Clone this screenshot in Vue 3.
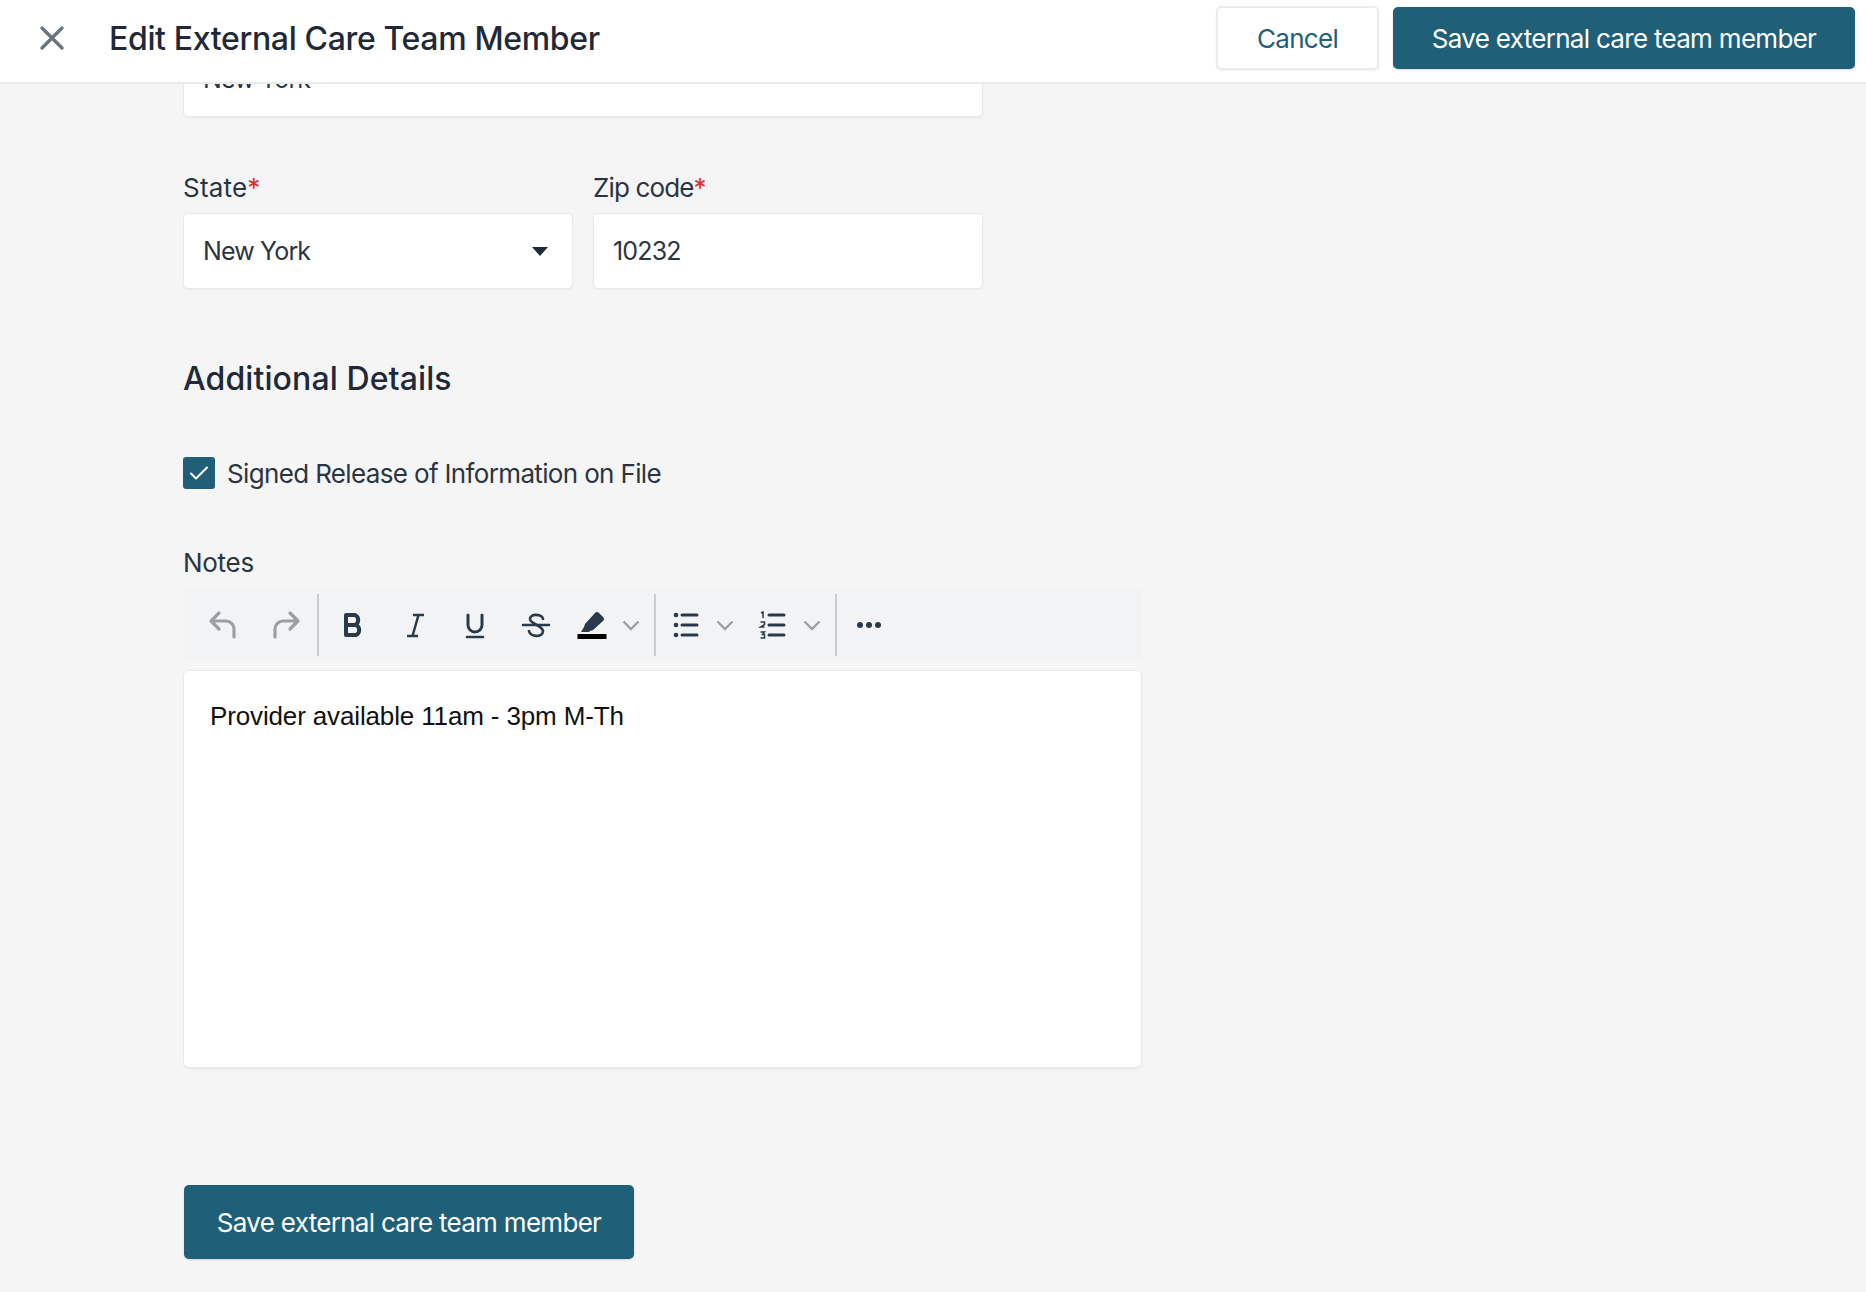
<script setup>
const title = 'Edit External Care Team Member'
const save = 'Save external care team member'
</script>

<template>
  <div class="page">
    <header class="topbar">
      <button class="close" aria-label="Close">
        <svg width="26" height="26" viewBox="0 0 26 26"><path d="M3 3 L23 23 M23 3 L3 23" stroke="#6b7280" stroke-width="3.400" fill="none" stroke-linecap="round"/></svg>
      </button>
      <h1>{{ title }}</h1>
      <div class="actions">
        <button class="btn ghost">Cancel</button>
        <button class="btn primary top">{{ save }}</button>
      </div>
    </header>
    <main class="scroller">
      <div class="form">
        <div class="input city">New York</div>
        <div class="row">
          <div class="field">
            <label class="state">State<span class="req">*</span></label>
            <div class="input select">
              <span>New York</span>
              <svg width="16" height="9" viewBox="0 0 16 9"><path d="M0 0 H16 L8 9 Z" fill="#1f2937"/></svg>
            </div>
          </div>
          <div class="field">
            <label class="zip">Zip code<span class="req">*</span></label>
            <div class="input">10232</div>
          </div>
        </div>
        <h2>Additional Details</h2>
        <div class="check">
          <span class="box">
            <svg width="20" height="16" viewBox="0 0 20 16"><path d="M2 8.500 L7 13.500 L18 2.500" stroke="#fff" stroke-width="2" fill="none" stroke-linecap="round" stroke-linejoin="round"/></svg>
          </span>
          <span>Signed Release of Information on File</span>
        </div>
        <label class="notes">Notes</label>
        <div class="toolbar">
          <div class="group g1">
            <svg class="ic" viewBox="0 0 30 30"><path d="M11 3 L3 11 L11 19 M3 11 H18 A8 8 0 0 1 26 19 V27" stroke="#9aa0a6" stroke-width="3.200" fill="none" stroke-linecap="round" stroke-linejoin="round"/></svg>
            <svg class="ic" viewBox="0 0 30 30"><path d="M19 3 L27 11 L19 19 M27 11 H12 A8 8 0 0 0 4 19 V27" stroke="#9aa0a6" stroke-width="3.200" fill="none" stroke-linecap="round" stroke-linejoin="round"/></svg>
          </div>
          <i class="sep"></i>
          <div class="group g2">
            <svg class="ic" viewBox="0 0 30 30"><path d="M7 5 H16 A5.500 5.500 0 0 1 16 15 H7 Z M7 15 H17 A5.500 5.500 0 0 1 17 25 H7 Z" stroke="#2b3a4a" stroke-width="4" fill="none" stroke-linejoin="round"/></svg>
            <svg class="ic" viewBox="0 0 30 30"><path d="M13 5 H24 M7 26 H18 M18.500 5 L12.500 26" stroke="#2b3a4a" stroke-width="2.500" fill="none"/></svg>
            <svg class="ic" viewBox="0 0 30 30"><path d="M8 5 V15 A7 7 0 0 0 22 15 V5" stroke="#2b3a4a" stroke-width="3" fill="none" stroke-linecap="round"/><path d="M7 27 H23" stroke="#2b3a4a" stroke-width="2.600" stroke-linecap="round"/></svg>
            <svg class="ic" viewBox="0 0 30 30"><path d="M2 15 H28" stroke="#2b3a4a" stroke-width="2.600" stroke-linecap="round"/><path d="M22 9 C21 4 9 3 9 9 C9 14 21 15 22 21 C22 28 9 27 8 21" stroke="#2b3a4a" stroke-width="2.600" fill="none" stroke-linecap="round"/></svg>
            <span class="drop hl">
              <svg class="ic" viewBox="0 0 30 30"><path d="M4 22 L7 17 L8 14 L18 3 Q20 1 22 3 L26 7 Q28 9 26 11 L16 20 L13 21 L12 22 Z" fill="#2b3a4a"/><rect x="0.500" y="24" width="29" height="5" fill="#000"/></svg>
              <svg class="chev" viewBox="0 0 18 11"><path d="M1.500 1.500 L9 9 L16.500 1.500" stroke="#9aa0a6" stroke-width="2.400" fill="none"/></svg>
            </span>
          </div>
          <i class="sep"></i>
          <div class="group g3">
            <span class="drop">
              <svg class="ic" viewBox="0 0 30 30"><circle cx="5" cy="5" r="2.300" fill="#2b3a4a"/><circle cx="5" cy="15" r="2.300" fill="#2b3a4a"/><circle cx="5" cy="25" r="2.300" fill="#2b3a4a"/><path d="M11 5 H26 M11 15 H26 M11 25 H26" stroke="#2b3a4a" stroke-width="3" stroke-linecap="round"/></svg>
              <svg class="chev" viewBox="0 0 18 11"><path d="M1.500 1.500 L9 9 L16.500 1.500" stroke="#9aa0a6" stroke-width="2.400" fill="none"/></svg>
            </span>
            <span class="drop">
              <svg class="ic" viewBox="0 0 30 30"><path d="M3 3 L5 2 V8 M2.500 12 H6.500 V14.500 L2.500 17 H6.500 M2.500 22 H6.500 L4.500 24.500 H6.500 V28 H2.500" stroke="#2b3a4a" stroke-width="1.500" fill="none"/><path d="M11 5 H26 M11 15 H26 M11 25 H26" stroke="#2b3a4a" stroke-width="3" stroke-linecap="round"/></svg>
              <svg class="chev" viewBox="0 0 18 11"><path d="M1.500 1.500 L9 9 L16.500 1.500" stroke="#9aa0a6" stroke-width="2.400" fill="none"/></svg>
            </span>
          </div>
          <i class="sep"></i>
          <svg class="more" width="26" height="8" viewBox="0 0 26 8"><circle cx="4" cy="4" r="3" fill="#2b3a4a"/><circle cx="13" cy="4" r="3" fill="#2b3a4a"/><circle cx="22" cy="4" r="3" fill="#2b3a4a"/></svg>
        </div>
        <div class="editor">Provider available 11am - 3pm M-Th</div>
        <button class="btn primary bottom">{{ save }}</button>
      </div>
    </main>
  </div>
</template>

<style>
html, body { margin: 0; background: #f5f5f6; }
</style>

<style scoped>
.page {
  height: 1292px;
  width: 1866px;
  overflow: hidden;
  display: flex;
  flex-direction: column;
  background: #f5f5f6;
  font-family: Inter, "Noto Sans", sans-serif;
  color: #2b3542;
}
.topbar {
  flex: none;
  box-sizing: border-box;
  height: 84px;
  padding-bottom: 6px;
  background: #fff;
  border-bottom: 2px solid #eaebef;
  display: flex;
  align-items: center;
  position: relative;
  z-index: 2;
}
.close {
  all: unset;
  margin-left: 39px;
  width: 26px;
  height: 26px;
  display: flex;
}
h1 {
  margin: 0 0 0 44px;
  font-size: 32px;
  font-weight: 500;
  letter-spacing: -0.35px;
  color: #1f2937;
}
.actions {
  margin-left: auto;
  margin-right: 11px;
  display: flex;
  gap: 14px;
  align-items: center;
}
.btn {
  font: inherit;
  font-size: 26px;
  letter-spacing: -0.7px;
  border-radius: 5px;
  box-sizing: border-box;
  cursor: pointer;
}
.ghost {
  width: 163px;
  height: 64px;
  background: #fff;
  border: 2px solid #ebecf0;
  color: #1f5f78;
  box-shadow: 0 1px 2px rgba(0,0,0,.06);
}
.primary {
  background: #1f5f78;
  color: #fff;
  border: 0;
  box-shadow: 0 1px 2px rgba(0,0,0,.15);
}
.top { width: 462px; height: 62px; }
.scroller { flex: 1; overflow: hidden; }
.form {
  margin: -43px 0 0 183px;
  width: 959px;
  display: flex;
  flex-direction: column;
  align-items: flex-start;
}
.input {
  box-sizing: border-box;
  height: 76px;
  width: 390px;
  background: #fff;
  border: 1px solid #e8e9ed;
  border-radius: 5px;
  box-shadow: 0 1px 2px rgba(0,0,0,.05);
  display: flex;
  align-items: center;
  padding: 0 19px;
  font-size: 25px;
  letter-spacing: -0.85px;
}
.city { width: 800px; }
.row {
  margin-top: 55px;
  display: flex;
  gap: 20px;
}
.field { display: flex; flex-direction: column; }
label {
  font-size: 26px;
  line-height: 32px;
  letter-spacing: -0.3px;
  margin-bottom: 9px;
}
.state { letter-spacing: 0.2px; }
.zip { letter-spacing: -0.85px; }
.req { color: #e02b2b; }
.select { justify-content: space-between; padding-right: 24px; }
h2 {
  margin: 70px 0 0;
  font-size: 32px;
  line-height: 40px;
  font-weight: 500;
  letter-spacing: 0.1px;
  color: #1f2937;
}
.check {
  margin-top: 58px;
  display: flex;
  align-items: center;
  gap: 12px;
  font-size: 26px;
  letter-spacing: -0.65px;
}
.box {
  width: 32px;
  height: 32px;
  border-radius: 3px;
  background: #1f5f78;
  display: flex;
  align-items: center;
  justify-content: center;
}
.notes { margin: 58px 0 0; }
.toolbar {
  margin-top: 10px;
  box-sizing: border-box;
  width: 959px;
  height: 72px;
  background: #f2f3f5;
  border-radius: 4px;
  display: flex;
  align-items: center;
  padding-left: 25px;
}
.group { display: flex; align-items: center; }
.ic { width: 30px; height: 30px; display: block; }
.g1 { gap: 33px; width: 94px; }
.g2 { gap: 30.5px; margin-left: 20px; }
.g3 { gap: 24px; margin-left: 15px; }
.sep { width: 2px; height: 62px; background: #c9ccd1; flex: none; margin-left: 14px; }
.g1 + .sep { margin-left: 15px; }
.drop { display: flex; align-items: center; gap: 15px; }
.hl { margin-left: -4px; }
.chev { width: 18px; height: 11px; }
.more { margin-left: 19px; }
.editor {
  margin-top: 9px;
  box-sizing: border-box;
  width: 959px;
  height: 398px;
  background: #fff;
  border: 1px solid #e8e9ed;
  border-radius: 6px;
  box-shadow: 0 1px 2px rgba(0,0,0,.05);
  padding: 28px 26px;
  font-family: "Liberation Sans", Arial, sans-serif;
  font-size: 26px;
  line-height: 34px;
  letter-spacing: -0.14px;
  color: #111;
}
.bottom {
  margin-top: 117px;
  margin-left: 1px;
  width: 450px;
  height: 74px;
}
</style>
